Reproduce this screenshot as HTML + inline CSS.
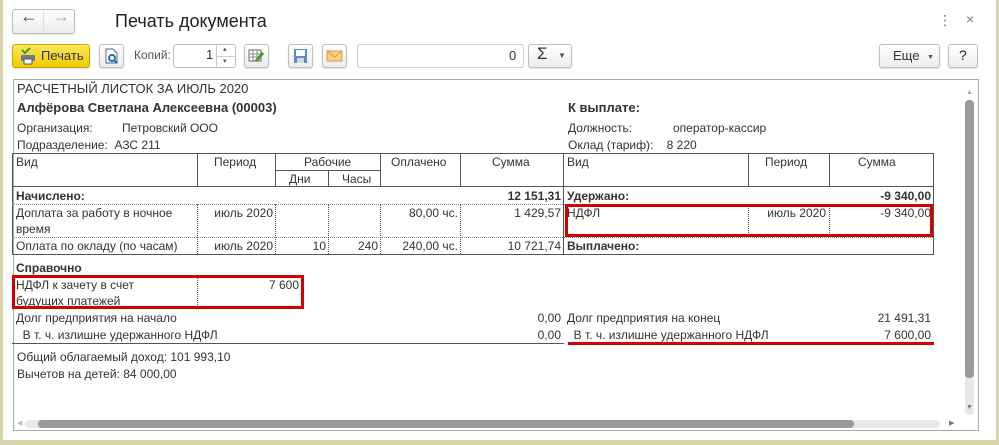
<!DOCTYPE html>
<html><head><meta charset="utf-8"><style>
*{box-sizing:border-box;margin:0;padding:0}
body{width:999px;height:445px;background:#d8d3a8;position:relative;overflow:hidden;font-family:"Liberation Sans","DejaVu Sans",sans-serif;font-size:12px;color:#333}
#win{position:absolute;left:3px;top:0;width:993px;height:440px;background:#fff}
.a{position:absolute;white-space:nowrap;line-height:16px}
.btn{position:absolute;border:1px solid #bdbdbd;border-radius:3px;background:linear-gradient(#fff,#ececec);box-shadow:0 1px 1px rgba(0,0,0,.12)}
.r{text-align:right}
.b{font-weight:bold}
.l{position:absolute;background:#555}
.dv{position:absolute;border-left:1px dotted #555}
.dh{position:absolute;border-top:1px dotted #888}
.red{position:absolute;border:3px solid #d40000}
</style></head><body>
<div id="win"></div>
<!-- nav -->
<div class="btn" style="left:12px;top:9px;width:63px;height:25px"></div>
<div style="position:absolute;left:43px;top:12px;width:1px;height:19px;background:#ddd"></div>
<div class="a" style="left:20px;top:8px;font-size:18px;color:#444">&#x2190;</div>
<div class="a" style="left:52px;top:8px;font-size:18px;color:#aaa">&#x2192;</div>
<div class="a" style="left:115px;top:10px;font-size:18px;color:#222;line-height:22px">Печать документа</div>
<div class="a" style="left:938px;top:12px;color:#777;font-size:14px">⋮</div>
<div class="a" style="left:966px;top:11px;color:#777;font-size:14px">×</div>
<!-- toolbar -->
<div class="btn" style="left:12px;top:44px;width:78px;height:24px;background:linear-gradient(#fbe65a,#f1cc00);border-color:#c8a600"></div>
<svg style="position:absolute;left:19px;top:47px" width="18" height="18"><path d="M3 3l3 3 5-5" stroke="#3a9d23" stroke-width="2" fill="none"/><rect x="2" y="8" width="14" height="6" fill="#6a7f97"/><rect x="5" y="12" width="8" height="5" fill="#fff" stroke="#555"/></svg>
<div class="a" style="left:41px;top:48px;font-size:13px;color:#333">Печать</div>
<div class="btn" style="left:99px;top:44px;width:25px;height:24px"></div>
<svg style="position:absolute;left:104px;top:48px" width="15" height="16"><path d="M2 1h7l4 4v10H2z" fill="#fff" stroke="#567"/><circle cx="8" cy="10" r="3" fill="none" stroke="#2a6ab0" stroke-width="2"/><path d="M10 12l3 3" stroke="#2a6ab0" stroke-width="2"/></svg>
<div class="a" style="left:134px;top:47px;color:#555">Копий:</div>
<div style="position:absolute;left:173px;top:44px;width:63px;height:24px;border:1px solid #bbb;border-radius:3px"></div>
<div style="position:absolute;left:216px;top:45px;width:1px;height:22px;background:#ccc"></div>
<div style="position:absolute;left:217px;top:56px;width:18px;height:1px;background:#ccc"></div>
<div class="a" style="left:206px;top:47px;font-size:13px">1</div>
<div class="a" style="left:223px;top:42px;font-size:7px;color:#555">▴</div>
<div class="a" style="left:223px;top:54px;font-size:7px;color:#555">▾</div>
<div class="btn" style="left:244px;top:44px;width:25px;height:24px"></div>
<svg style="position:absolute;left:248px;top:48px" width="17" height="16"><rect x="1" y="2" width="12" height="11" fill="#fff" stroke="#666"/><path d="M1 6h12M1 9h12M5 2v11M9 2v11" stroke="#888"/><path d="M8 13l7-8" stroke="#4a9c2f" stroke-width="3"/></svg>
<div class="btn" style="left:288px;top:44px;width:25px;height:24px"></div>
<svg style="position:absolute;left:293px;top:48px" width="15" height="16"><rect x="1" y="1" width="13" height="14" fill="#5b8bc9"/><rect x="3" y="2" width="9" height="6" fill="#fff"/><rect x="4" y="10" width="7" height="5" fill="#cdd"/></svg>
<div class="btn" style="left:322px;top:44px;width:25px;height:24px"></div>
<svg style="position:absolute;left:326px;top:50px" width="17" height="12"><rect x="1" y="1" width="15" height="10" fill="#f6d08a" stroke="#d49a3a"/><path d="M1 1l7.5 6L16 1" fill="none" stroke="#d49a3a"/></svg>
<div style="position:absolute;left:357px;top:44px;width:167px;height:24px;border:1px solid #ccc;border-radius:3px"></div>
<div class="a" style="left:509px;top:48px;font-size:13px">0</div>
<div class="btn" style="left:528px;top:44px;width:44px;height:24px"></div>
<div class="a" style="left:537px;top:46px;font-size:17px;color:#333">Σ</div>
<div class="a" style="left:558px;top:48px;font-size:8px;color:#555">▼</div>
<div class="btn" style="left:879px;top:44px;width:61px;height:24px"></div>
<div class="a" style="left:893px;top:48px;font-size:13px">Еще</div>
<div class="a" style="left:927px;top:50px;font-size:7px;color:#555">▼</div>
<div class="btn" style="left:948px;top:44px;width:30px;height:24px"></div>
<div class="a" style="left:959px;top:47px;font-size:14px;color:#222">?</div>
<!-- content box -->
<div style="position:absolute;left:13px;top:79px;width:966px;height:352px;border:1px solid #aaa"></div>
<div class="a" style="left:17px;top:81px;font-size:13px">РАСЧЕТНЫЙ ЛИСТОК ЗА ИЮЛЬ 2020</div>
<div class="a b" style="left:17px;top:100px;font-size:13px">Алфёрова Светлана Алексеевна (00003)</div>
<div class="a" style="left:17px;top:120px">Организация:</div>
<div class="a" style="left:122px;top:120px">Петровский ООО</div>
<div class="a" style="left:17px;top:137px">Подразделение:&nbsp; АЗС 211</div>
<div class="a b" style="left:568px;top:100px;font-size:13px">К выплате:</div>
<div class="a" style="left:568px;top:120px">Должность:</div>
<div class="a" style="left:673px;top:120px">оператор-кассир</div>
<div class="a" style="left:568px;top:137px">Оклад (тариф):&nbsp;&nbsp;&nbsp; 8 220</div>
<!-- table lines -->
<div class="l" style="left:12px;top:153px;width:922px;height:1px"></div>
<div class="l" style="left:12px;top:186px;width:922px;height:1px"></div>
<div class="l" style="left:12px;top:153px;width:1px;height:101px"></div>
<div class="l" style="left:933px;top:153px;width:1px;height:101px"></div>
<div class="l" style="left:563px;top:153px;width:1px;height:101px"></div>
<div class="l" style="left:197px;top:153px;width:1px;height:33px"></div>
<div class="l" style="left:275px;top:153px;width:1px;height:33px"></div>
<div class="l" style="left:380px;top:153px;width:1px;height:33px"></div>
<div class="l" style="left:460px;top:153px;width:1px;height:33px"></div>
<div class="l" style="left:328px;top:170px;width:1px;height:16px"></div>
<div class="l" style="left:275px;top:170px;width:105px;height:1px"></div>
<div class="l" style="left:748px;top:153px;width:1px;height:33px"></div>
<div class="l" style="left:829px;top:153px;width:1px;height:33px"></div>
<div class="l" style="left:12px;top:254px;width:922px;height:1px"></div>
<div class="dh" style="left:12px;top:204px;width:551px"></div>
<div class="dh" style="left:12px;top:237px;width:551px"></div>
<div class="dh" style="left:564px;top:204px;width:369px"></div>
<div class="dh" style="left:564px;top:237px;width:369px"></div>
<div class="dv" style="left:197px;top:204px;height:50px"></div>
<div class="dv" style="left:275px;top:204px;height:50px"></div>
<div class="dv" style="left:328px;top:204px;height:50px"></div>
<div class="dv" style="left:380px;top:204px;height:50px"></div>
<div class="dv" style="left:460px;top:204px;height:50px"></div>
<div class="dv" style="left:748px;top:204px;height:33px"></div>
<div class="dv" style="left:829px;top:204px;height:33px"></div>
<!-- header text -->
<div class="a" style="left:16px;top:154px">Вид</div>
<div class="a" style="left:214px;top:154px">Период</div>
<div class="a" style="left:304px;top:154px">Рабочие</div>
<div class="a" style="left:289px;top:171px">Дни</div>
<div class="a" style="left:342px;top:171px">Часы</div>
<div class="a" style="left:391px;top:154px">Оплачено</div>
<div class="a" style="left:492px;top:154px">Сумма</div>
<div class="a" style="left:567px;top:154px">Вид</div>
<div class="a" style="left:765px;top:154px">Период</div>
<div class="a" style="left:858px;top:154px">Сумма</div>
<!-- rows -->
<div class="a b" style="left:16px;top:188px">Начислено:</div>
<div class="a b r" style="left:460px;top:188px;width:101px">12 151,31</div>
<div class="a" style="left:16px;top:205px">Доплата за работу в ночное<br>время</div>
<div class="a r" style="left:197px;top:205px;width:76px">июль 2020</div>
<div class="a r" style="left:380px;top:205px;width:78px">80,00 чс.</div>
<div class="a r" style="left:460px;top:205px;width:101px">1 429,57</div>
<div class="a" style="left:16px;top:238px">Оплата по окладу (по часам)</div>
<div class="a r" style="left:197px;top:238px;width:76px">июль 2020</div>
<div class="a r" style="left:275px;top:238px;width:51px">10</div>
<div class="a r" style="left:328px;top:238px;width:50px">240</div>
<div class="a r" style="left:380px;top:238px;width:78px">240,00 чс.</div>
<div class="a r" style="left:460px;top:238px;width:101px">10 721,74</div>
<div class="a b" style="left:567px;top:188px">Удержано:</div>
<div class="a b r" style="left:829px;top:188px;width:102px">-9 340,00</div>
<div class="a" style="left:567px;top:205px">НДФЛ</div>
<div class="a r" style="left:748px;top:205px;width:78px">июль 2020</div>
<div class="a r" style="left:829px;top:205px;width:102px">-9 340,00</div>
<div class="a b" style="left:567px;top:238px">Выплачено:</div>
<div class="red" style="left:565px;top:204px;width:368px;height:33px"></div>
<!-- справочно -->
<div class="a b" style="left:16px;top:260px">Справочно</div>
<div class="a" style="left:16px;top:277px">НДФЛ к зачету в счет<br>будущих платежей</div>
<div class="dv" style="left:197px;top:277px;height:32px"></div>
<div class="a r" style="left:197px;top:277px;width:102px">7 600</div>
<div class="red" style="left:12px;top:275px;width:292px;height:34px"></div>
<div class="a" style="left:16px;top:310px">Долг предприятия на начало</div>
<div class="a r" style="left:460px;top:310px;width:101px">0,00</div>
<div class="a" style="left:16px;top:327px">&nbsp; В т. ч. излишне удержанного НДФЛ</div>
<div class="a r" style="left:460px;top:327px;width:101px">0,00</div>
<div class="a" style="left:567px;top:310px">Долг предприятия на конец</div>
<div class="a r" style="left:829px;top:310px;width:102px">21 491,31</div>
<div class="a" style="left:567px;top:327px">&nbsp; В т. ч. излишне удержанного НДФЛ</div>
<div class="a r" style="left:829px;top:327px;width:102px">7 600,00</div>
<div class="l" style="left:12px;top:343px;width:552px;height:1px"></div>
<div style="position:absolute;left:568px;top:342px;width:366px;height:3px;background:#d40000"></div>
<div class="a" style="left:17px;top:349px">Общий облагаемый доход: 101 993,10</div>
<div class="a" style="left:17px;top:366px">Вычетов на детей: 84 000,00</div>
<!-- scrollbars -->
<div style="position:absolute;left:965px;top:100px;width:9px;height:315px;background:#e8e8e8;border-radius:4px"></div>
<div style="position:absolute;left:965px;top:100px;width:9px;height:278px;background:#9a9a9a;border-radius:4px"></div>
<div class="a" style="left:966px;top:85px;font-size:7px;color:#aaa">▲</div>
<div class="a" style="left:966px;top:400px;font-size:7px;color:#777">▼</div>
<div style="position:absolute;left:25px;top:420px;width:915px;height:8px;background:#e8e8e8;border-radius:4px"></div>
<div style="position:absolute;left:38px;top:420px;width:816px;height:8px;background:#9a9a9a;border-radius:4px"></div>
<div class="a" style="left:17px;top:416px;font-size:7px;color:#bbb">◀</div>
<div class="a" style="left:949px;top:416px;font-size:7px;color:#777">▶</div>
</body></html>
